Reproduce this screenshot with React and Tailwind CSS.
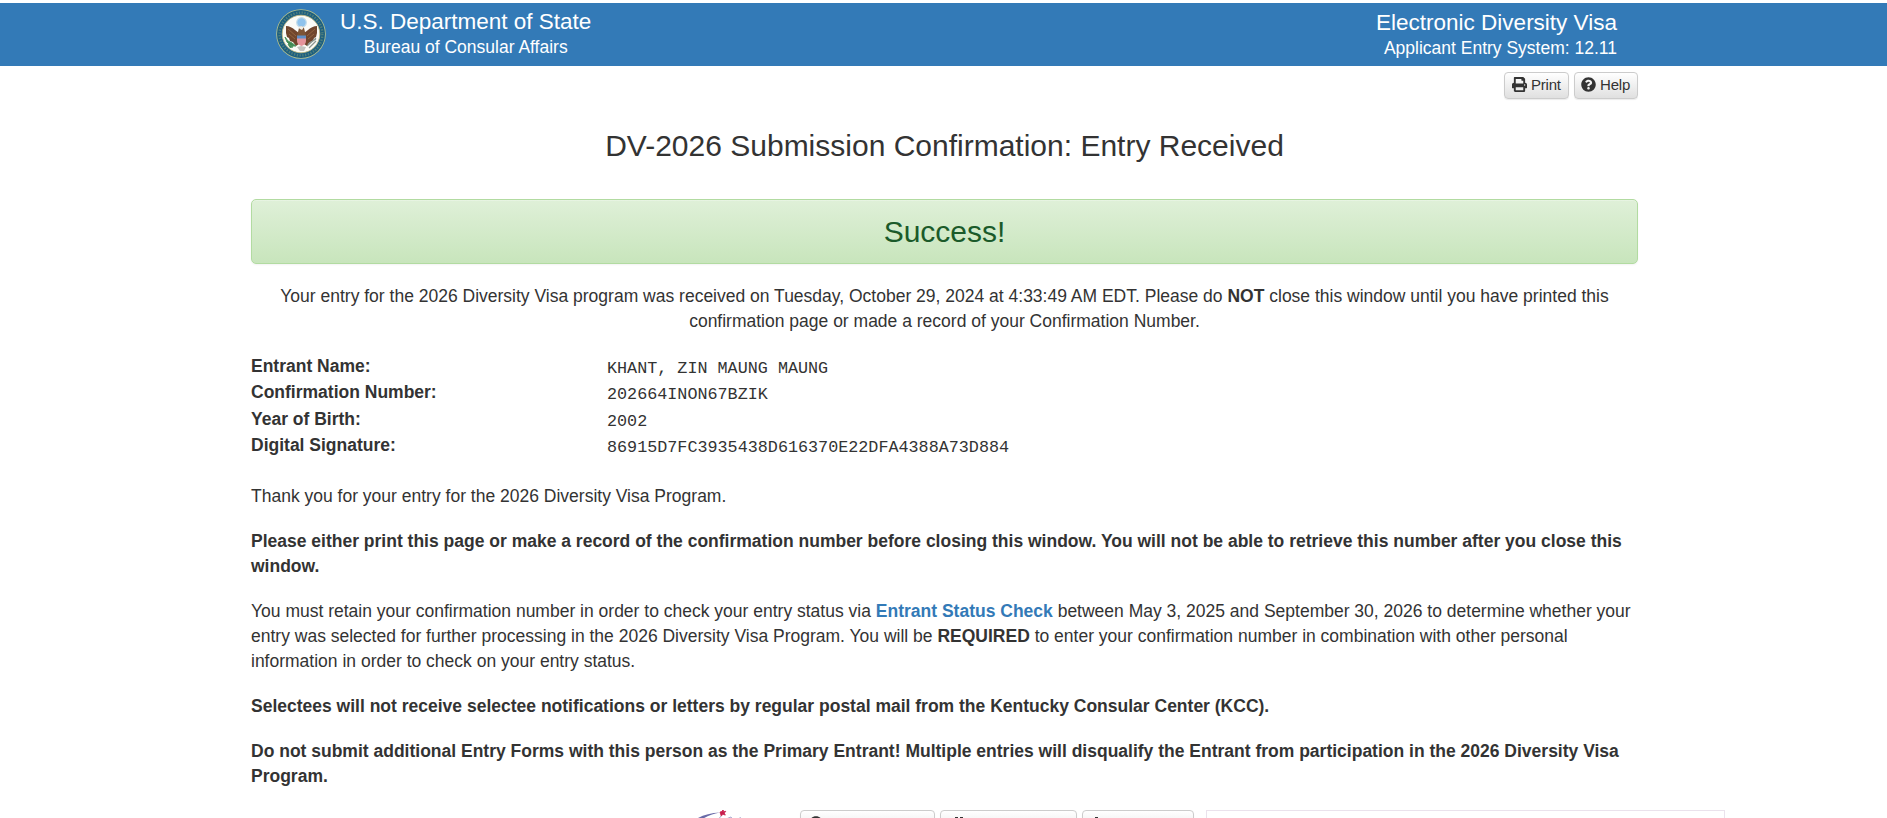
import { FaPrint, FaQuestionCircle } from "react-icons/fa";

const BTN =
  "flex items-center rounded-[4px] border border-[#ccc] bg-gradient-to-b from-white to-[#e0e0e0] text-[#333] shadow-[0_1px_1px_rgba(0,0,0,0.08)]";

function Seal() {
  return (
    <svg viewBox="0 0 50 50" className="h-[50px] w-[50px] shrink-0">
      <circle cx="25" cy="25" r="24.8" fill="#b9c48c" />
      <circle cx="25" cy="25" r="24" fill="#1d5f80" />
      <circle cx="25" cy="25" r="21.400" fill="none" stroke="#8da678" strokeWidth="2.400" strokeDasharray="1.3 1.5" opacity=".45" />
      <circle cx="25" cy="25" r="18.8" fill="#fbfbf7" stroke="#c9bd7c" strokeWidth=".8" />
      <circle cx="25.500" cy="13.500" r="4.800" fill="#8fc3ec" stroke="#c3dcea" strokeWidth="1.200" />
      <path d="M10 17c3 0 7 2 9 4l4 3 0 11-3 2-3-4-3-1-1-3-2-1-1-4z" fill="#71462d" />
      <path d="M41 17c-3 0-7 2-9 4l-4 3 0 11 3 2 3-4 3-1 1-3 2-1 1-4z" fill="#71462d" />
      <path d="M12 20l8 7M13 25l6 5M39 20l-8 7M38 25l-6 5" stroke="#9b6d45" strokeWidth=".8" />
      <path d="M23 19c1-2 4-2 5 0l1 4 1 4h-9l1-4z" fill="#7d5536" />
      <path d="M22 18.500l3-1.500 3 1-2 3-2-1z" fill="#f2efe6" />
      <path d="M21 27h9v5c0 3-2 4-4.500 5-2.500-1-4.500-2-4.500-5z" fill="#e5939b" />
      <path d="M21 26.500h9v3h-9z" fill="#5f8fc6" />
      <path d="M9 28l3 4 4 2 4 3-5 0-4-4zM12 35l5 3-3 .5z" fill="#3f8a54" stroke="#4f9560" strokeWidth="1" />
      <path d="M31 37l9-8M33 39l7-7M32 35l8-5" stroke="#8c9690" strokeWidth="1.200" />
      <path d="M21 38l4-1 5 1-2 4h-4z" fill="#c3c3bf" />
    </svg>
  );
}

const DETAILS = [
  ["Entrant Name:", "KHANT, ZIN MAUNG MAUNG"],
  ["Confirmation Number:", "202664INON67BZIK"],
  ["Year of Birth:", "2002"],
  ["Digital Signature:", "86915D7FC3935438D616370E22DFA4388A73D884"],
];

export default function App() {
  return (
    <div className="flex h-[818px] flex-col overflow-hidden bg-white pt-[3px] font-['Liberation_Sans',Arial,sans-serif] text-[17.5px] leading-[25px] text-[#333]">
      <header className="h-[63px] shrink-0 bg-[#337ab7] pl-[251px] text-white">
        <div className="flex w-[1387px] justify-between pr-[21px] pl-[25px]">
          <div className="flex">
            <div className="pt-[6px]">
              <Seal />
            </div>
            <div className="ml-[14px] pt-[6px] text-center">
              <div className="text-[22.500px] leading-[26px]">U.S. Department of State</div>
              <div className="text-[17.500px] leading-[24px]">Bureau of Consular Affairs</div>
            </div>
          </div>
          <div className="pt-[7px] text-right">
            <div className="text-[22.500px] leading-[26px]">Electronic Diversity Visa</div>
            <div className="text-[17.500px] leading-[24px]">Applicant Entry System: 12.11</div>
          </div>
        </div>
      </header>

      <main className="ml-[251px] w-[1387px]">
        <div className="flex justify-end gap-[5px] pt-[6px] text-[15px] leading-[22px]">
          <button className={`${BTN} h-[27px] w-[65px] gap-[4px] pb-[2px] pl-[7px]`}>
            <FaPrint className="shrink-0 text-[15px]" />
            <span className="tracking-[-0.2px]">Print</span>
          </button>
          <button className={`${BTN} h-[27px] w-[64px] gap-[4px] pb-[2px] pl-[6px]`}>
            <FaQuestionCircle className="shrink-0 text-[15px]" />
            <span className="tracking-[-0.2px]">Help</span>
          </button>
        </div>

        <h1 className="mt-[30px] text-center text-[30px] leading-[33px]">DV-2026 Submission Confirmation: Entry Received</h1>

        <div className="mt-[37px] flex h-[65px] items-center justify-center rounded-[5px] border border-[#b2dba1] bg-gradient-to-b from-[#dff0d8] to-[#c8e5bc] text-[30px] text-[#1b5a2a] shadow-[inset_0_1px_0_rgba(255,255,255,0.25),0_1px_2px_rgba(0,0,0,0.05)]">
          Success!
        </div>

        <p className="mt-[20px] px-[19px] text-center">
          Your entry for the 2026 Diversity Visa program was received on Tuesday, October 29, 2024 at 4:33:49 AM EDT. Please do <b>NOT</b> close this window until you have printed this confirmation page or made a record of your Confirmation Number.
        </p>

        <dl className="mt-[20px]">
          {DETAILS.map(([label, value]) => (
            <div key={label} className="flex h-[26.400px]">
              <dt className="w-[356px] font-bold">{label}</dt>
              <dd className="pt-[2px] font-['Liberation_Mono',monospace] text-[16.750px]">{value}</dd>
            </div>
          ))}
        </dl>

        <div className="mt-[24px] flex flex-col gap-[20px]">
          <p>Thank you for your entry for the 2026 Diversity Visa Program.</p>
          <p className="font-bold">
            Please either print this page or make a record of the confirmation number before closing this window. You will not be able to retrieve this number after you close this window.
          </p>
          <p>
            You must retain your confirmation number in order to check your entry status via <a className="font-bold text-[#337ab7]">Entrant Status Check</a> between May 3, 2025 and September 30, 2026 to determine whether your entry was selected for further processing in the 2026 Diversity Visa Program. You will be <b>REQUIRED</b> to enter your confirmation number in combination with other personal information in order to check on your entry status.
          </p>
          <p className="font-bold">Selectees will not receive selectee notifications or letters by regular postal mail from the Kentucky Consular Center (KCC).</p>
          <p className="font-bold">
            Do not submit additional Entry Forms with this person as the Primary Entrant! Multiple entries will disqualify the Entrant from participation in the 2026 Diversity Visa Program.
          </p>
        </div>
      </main>

      <footer className="mt-[21px] flex h-[30px] shrink-0 pl-[696px]">
        <svg viewBox="0 0 50 30" className="mr-[54px] h-[30px] w-[50px]">
          <path d="M2 8Q11 3 24 2.500Q12 5 5 10z" fill="#6a6ba8" />
          <path d="M24 2l2-.5 1-2 .8 2.200 2-.4-1.500 1.800 1 2-2.300-.8-1.800 1.700z" fill="#c81e4c" stroke="#c81e4c" strokeWidth=".8" />
          <path d="M22 10l3-4M30 9l5-2 2 3M44 7l1 3" fill="none" stroke="#a9a4cb" strokeWidth="1" />
        </svg>
        <div className={`${BTN} mr-[5px] h-[30px] w-[135px] items-start pt-[5px] pl-[8px]`}>
          <FaQuestionCircle className="text-[14px]" />
        </div>
        <div className={`${BTN} mr-[5px] h-[30px] w-[137px] items-start pt-[5px] pl-[13px]`}>
          <svg viewBox="0 0 12 12" className="h-[12px] w-[12px]">
            <path d="M1 1h3v3H1zM6 1h3v3H6z" fill="#333" />
          </svg>
        </div>
        <div className={`${BTN} mr-[12px] h-[30px] w-[112px] items-start pt-[5px] pl-[11px]`}>
          <svg viewBox="0 0 12 12" className="h-[12px] w-[12px]">
            <path d="M1 1h3v8H1z" fill="#333" />
          </svg>
        </div>
        <div className="h-[30px] w-[519px] border border-[#eae2ec]" />
      </footer>
    </div>
  );
}
